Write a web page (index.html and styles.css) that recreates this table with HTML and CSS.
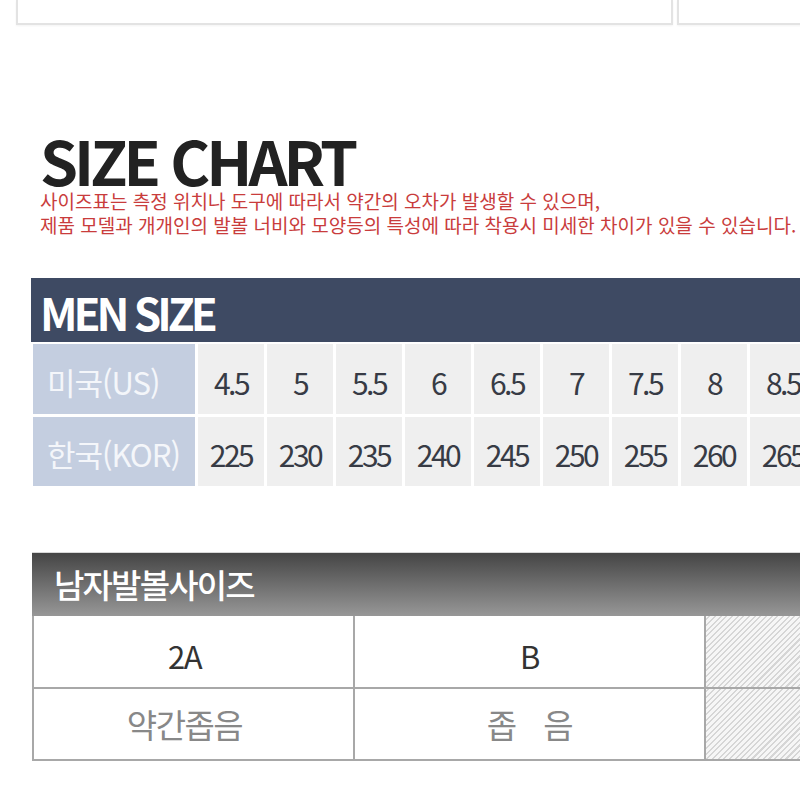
FILE: index.html
```html
<!DOCTYPE html>
<html lang="ko">
<head>
<meta charset="utf-8">
<title>Size Chart</title>
<link rel="stylesheet" href="styles.css">
</head>
<body>
<div class="top">
  <div class="top-box box-a"></div>
  <div class="top-box box-b"></div>
</div>

<section class="chart">
  <h1 class="chart-title">SIZE CHART</h1>
  <p class="notice">사이즈표는 측정 위치나 도구에 따라서 약간의 오차가 발생할 수 있으며,<br>제품 모델과 개개인의 발볼 너비와 모양등의 특성에 따라 착용시 미세한 차이가 있을 수 있습니다.</p>
</section>

<section class="men">
  <div class="men-head">MEN SIZE</div>
  <div class="men-grid">
    <div class="label">미국(US)</div>
    <div class="cell">4.5</div><div class="cell">5</div><div class="cell">5.5</div><div class="cell">6</div><div class="cell">6.5</div><div class="cell">7</div><div class="cell">7.5</div><div class="cell">8</div><div class="cell">8.5</div>
    <div class="label">한국(KOR)</div>
    <div class="cell">225</div><div class="cell">230</div><div class="cell">235</div><div class="cell">240</div><div class="cell">245</div><div class="cell">250</div><div class="cell">255</div><div class="cell">260</div><div class="cell">265</div>
  </div>
</section>

<section class="width">
  <div class="width-head">남자발볼사이즈</div>
  <div class="width-grid">
    <div class="wcell code first">2A</div>
    <div class="wcell code">B</div>
    <div class="wcell hatch"></div>
    <div class="wcell desc first">약간좁음</div>
    <div class="wcell desc spaced">좁 음</div>
    <div class="wcell hatch"></div>
  </div>
</section>
</body>
</html>
```

FILE: styles.css
```css
html, body {
  margin: 0;
  padding: 0;
}
body {
  width: 800px;
  height: 800px;
  overflow: hidden;
  background: #ffffff;
  font-family: "Noto Sans CJK KR", "Noto Sans", sans-serif;
}

.top {
  display: flex;
  gap: 4px;
  padding-left: 16px;
  height: 25px;
}
.top-box {
  height: 23px;
  border: 2px solid #e3e3e3;
  border-top: none;
  box-shadow: 0 1px 2px rgba(0, 0, 0, 0.05);
}
.box-a {
  width: 653px;
  flex: none;
}
.box-b {
  flex: 1;
  margin-right: -20px;
}

.chart {
  margin-top: 108px;
  padding-left: 40px;
}
.chart-title {
  margin: 0;
  font-size: 61px;
  line-height: 54px;
  font-weight: 700;
  letter-spacing: -4px;
  color: #222222;
}
.notice {
  margin: 2px 0 0;
  font-size: 19px;
  line-height: 24px;
  letter-spacing: 0;
  color: #c93c3c;
  white-space: nowrap;
}

.men {
  margin-top: 41px;
  margin-left: 31px;
  width: 769px;
  overflow: hidden;
}
.men-head {
  height: 64px;
  background: #3e4a63;
  color: #ffffff;
  font-size: 44px;
  font-weight: 700;
  line-height: 68px;
  letter-spacing: -4px;
  padding-left: 9px;
}
.men-grid {
  display: grid;
  grid-template-columns: 162px repeat(9, 66px);
  grid-template-rows: 70px 69px;
  gap: 3px;
  padding-top: 2px;
  margin-left: 2px;
}
.label {
  background: #c4cee0;
  color: #f4f6fa;
  font-size: 31px;
  letter-spacing: -1px;
  display: flex;
  align-items: center;
  padding-left: 14px;
  padding-top: 4px;
}
.cell {
  background: #efefef;
  color: #373b45;
  font-size: 30px;
  letter-spacing: -2.5px;
  display: flex;
  align-items: center;
  justify-content: center;
  white-space: nowrap;
  padding-top: 5px;
}

.width {
  margin-top: 66px;
  margin-left: 32px;
  width: 768px;
  overflow: hidden;
}
.width-head {
  height: 64px;
  background: linear-gradient(#454545, #979797);
  border-top: 1px solid #d8d8d8;
  box-sizing: border-box;
  color: #ffffff;
  font-size: 33px;
  font-weight: 500;
  letter-spacing: -1.8px;
  line-height: 62px;
  padding-left: 22px;
}
.width-grid {
  display: grid;
  grid-template-columns: 321px 351px 228px;
  grid-template-rows: 73px 72px;
  border-left: 2px solid #a8a8a8;
}
.wcell {
  border-right: 2px solid #a8a8a8;
  border-bottom: 2px solid #a8a8a8;
  display: flex;
  align-items: center;
  justify-content: center;
}
.wcell.first {
  padding-right: 18px;
}
.code {
  color: #333333;
  font-size: 31px;
  letter-spacing: -1.5px;
  padding-top: 8px;
}
.desc {
  color: #888888;
  font-size: 33px;
  letter-spacing: -1.5px;
}
.spaced {
  word-spacing: 20px;
}
.hatch {
  padding: 0;
  background: repeating-linear-gradient(-45deg, #f6f6f6 0px, #f6f6f6 2.5px, #d6d6d6 2.5px, #d6d6d6 4px);
}
```
